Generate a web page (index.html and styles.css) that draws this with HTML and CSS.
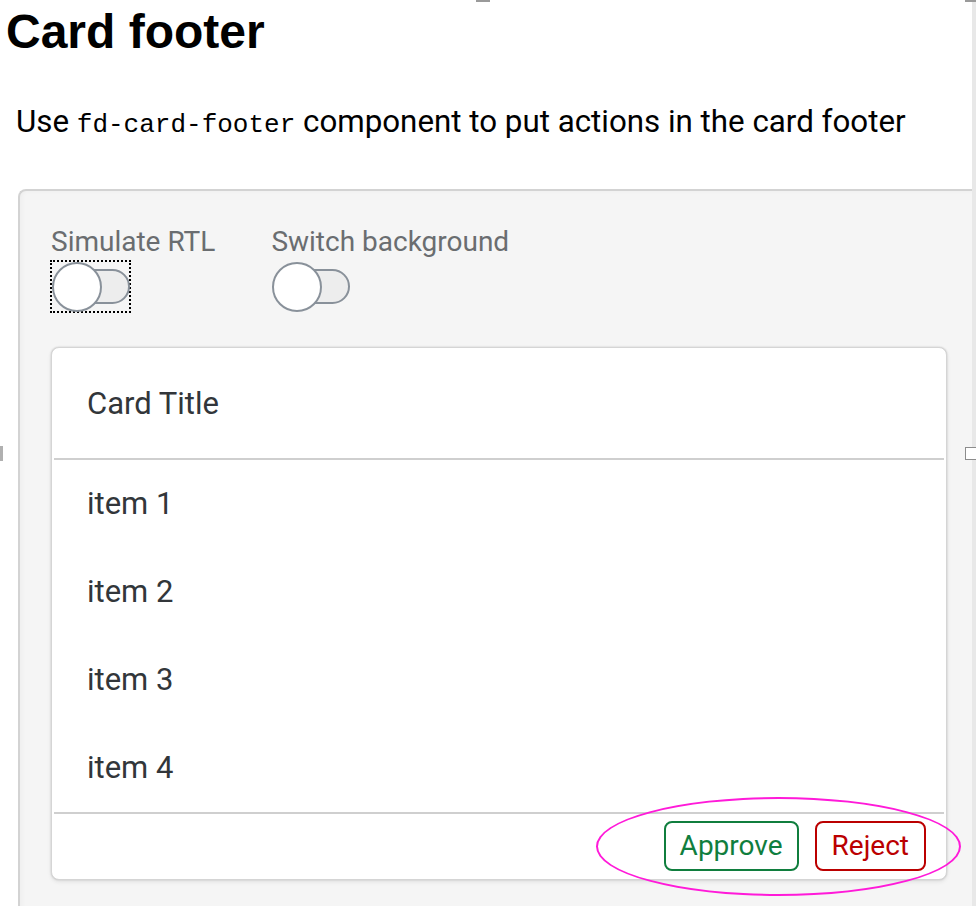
FILE: index.html
```html
<!DOCTYPE html>
<html lang="en">
<head>
<meta charset="utf-8">
<title>Card footer</title>
<link rel="stylesheet" href="styles.css">
</head>
<body>
<div class="page">
  <h1 class="title">Card footer</h1>
  <p class="desc">Use <code class="code">fd-card-footer</code> component to put actions in the card footer</p>

  <section class="example">
    <div class="controls">
      <div class="control">
        <span class="label">Simulate RTL</span>
        <span class="switch switch--focus"><span class="track"></span><span class="knob"></span></span>
      </div>
      <div class="control">
        <span class="label">Switch background</span>
        <span class="switch"><span class="track"></span><span class="knob"></span></span>
      </div>
    </div>

    <div class="card">
      <div class="card-header">Card Title</div>
      <div class="divider"></div>
      <ul class="card-list">
        <li class="card-item">item 1</li>
        <li class="card-item">item 2</li>
        <li class="card-item">item 3</li>
        <li class="card-item">item 4</li>
      </ul>
      <div class="divider"></div>
      <div class="card-footer">
        <button class="btn btn--positive">Approve</button>
        <button class="btn btn--negative">Reject</button>
      </div>
    </div>
  </section>
</div>

<div class="annotation"></div>
<div class="edge-strip"></div>
<div class="mark mark--top1"></div>
<div class="mark mark--top2"></div>
<div class="mark mark--left"></div>
<div class="handle"></div>
</body>
</html>
```

FILE: styles.css
```css
html, body {
  margin: 0;
  padding: 0;
  background: #ffffff;
  overflow: hidden;
}

body {
  font-family: Roboto, "Noto Sans", Arial, sans-serif;
  color: #32363a;
  width: 976px;
  height: 906px;
  position: relative;
}

.page {
  padding-top: 4px;
}

.title {
  margin: 0 0 0 6px;
  font-family: "Liberation Sans", Arial, sans-serif;
  font-weight: 700;
  font-size: 48px;
  line-height: 56px;
  color: #000;
}

.desc {
  margin: 42px 0 0 16px;
  font-size: 31.3px;
  line-height: 40px;
  color: #000;
  font-weight: 400;
}

.code {
  font-family: "Liberation Mono", "Courier New", monospace;
  font-size: 26px;
  font-weight: 400;
}

.example {
  margin: 44px 2px 0 18px;
  border: 2px solid #d3d3d3;
  border-right: none;
  border-bottom: none;
  border-radius: 8px 0 0 0;
  background: #f5f5f5;
  padding: 35px 27px 40px 31px;
  box-shadow: inset 2px 0 4px rgba(0,0,0,0.03);
}

.controls {
  display: flex;
  gap: 56px;
  margin-bottom: 35px;
}

.control {
  display: flex;
  flex-direction: column;
  align-items: flex-start;
}

.label {
  font-size: 28px;
  line-height: 32px;
  color: #6a6d70;
}

.switch {
  position: relative;
  display: block;
  width: 79px;
  height: 51px;
  margin-top: 3px;
}

.switch--focus {
  outline: 2px dotted #000;
  outline-offset: -1px;
}

.track {
  position: absolute;
  left: 24px;
  top: 8px;
  width: 55px;
  height: 35px;
  box-sizing: border-box;
  border: 2px solid #89919a;
  border-radius: 18px;
  background: #ededed;
}

.knob {
  position: absolute;
  left: 1px;
  top: 1px;
  width: 50px;
  height: 50px;
  box-sizing: border-box;
  border: 2px solid #89919a;
  border-radius: 50%;
  background: #fff;
}

.card {
  background: #fff;
  border: 1px solid #d5d5d5;
  border-radius: 8px;
  box-shadow: 0 0 2px rgba(0,0,0,0.18), 0 2px 4px rgba(0,0,0,0.08);
  overflow: hidden;
}

.card-header {
  height: 110px;
  display: flex;
  align-items: center;
  padding-left: 35px;
  font-size: 31px;
}

.divider {
  height: 2px;
  margin: 0 2px;
  background: #cfcfcf;
}

.card-list {
  list-style: none;
  margin: 0;
  padding: 0;
}

.card-item {
  height: 88px;
  display: flex;
  align-items: center;
  padding: 0 0 2px 35px;
  box-sizing: border-box;
  font-size: 31px;
}

.card-footer {
  display: flex;
  justify-content: flex-end;
  gap: 16px;
  padding: 7px 20px 8px 0;
}

.btn {
  height: 50px;
  padding: 0 15px;
  background: #fff;
  border: 2px solid;
  border-radius: 8px;
  font-family: Roboto, "Noto Sans", Arial, sans-serif;
  font-size: 28px;
  line-height: 1;
}

.btn--positive {
  padding: 0 14px;
  color: #107e3e;
  border-color: #107e3e;
}

.btn--negative {
  color: #bb0000;
  border-color: #bb0000;
}

.annotation {
  position: absolute;
  left: 596px;
  top: 797px;
  width: 365px;
  height: 99px;
  box-sizing: border-box;
  border: 2px solid #ff1ad9;
  border-radius: 50%;
}

.edge-strip {
  position: absolute;
  right: 0;
  top: 0;
  width: 4px;
  height: 906px;
  background: #e8e8e8;
}

.mark {
  position: absolute;
  background: #9a9a9a;
}

.mark--top1 {
  left: 476px;
  top: 0;
  width: 14px;
  height: 2px;
}

.mark--top2 {
  left: 965px;
  top: 0;
  width: 11px;
  height: 2px;
}

.mark--left {
  left: 0;
  top: 446px;
  width: 3px;
  height: 15px;
  background: #b0b0b0;
}

.handle {
  position: absolute;
  left: 965px;
  top: 447px;
  width: 11px;
  height: 13px;
  box-sizing: border-box;
  background: #fff;
  border: 1px solid #8c8c8c;
  border-right: none;
}
```
